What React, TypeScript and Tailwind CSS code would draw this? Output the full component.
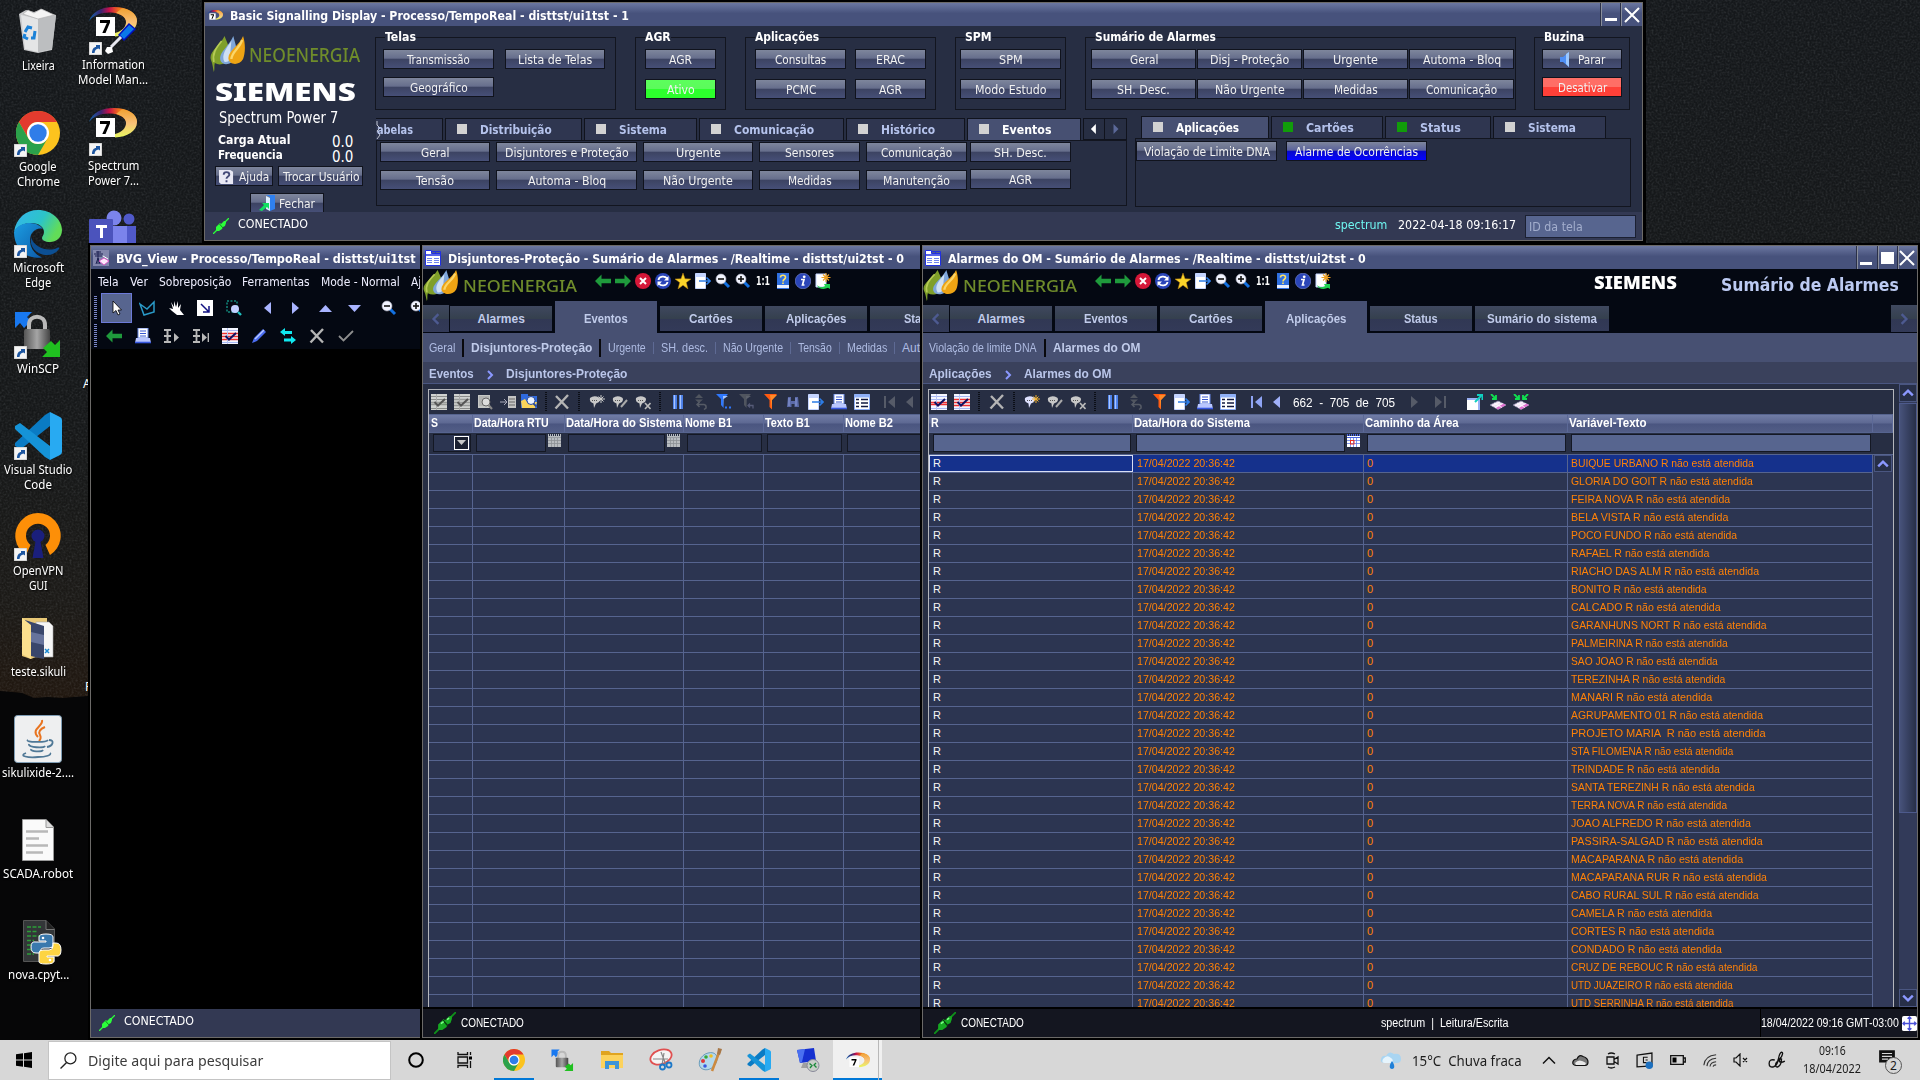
import React, { useLayoutEffect, useRef, useState } from "react";

type P = { className?: string; children?: React.ReactNode };

/* Text squeezed or stretched horizontally to a given width. */
function Fit({ w, t, className = "" }: { w: number; t: string; className?: string }) {
  const ref = useRef<HTMLSpanElement>(null);
  const [k, setK] = useState(1);
  useLayoutEffect(() => {
    if (ref.current) setK(w / ref.current.offsetWidth);
  }, [w, t]);
  return (
    <span className={"inline-block shrink-0 whitespace-pre text-left " + className} style={{ width: w }}>
      <span ref={ref} className="inline-block origin-left" style={{ transform: `scaleX(${k})` }}>
        {t}
      </span>
    </span>
  );
}

const UI = "font-['DejaVu_Sans_Condensed','DejaVu_Sans',sans-serif]";
const ARIAL = "font-['Liberation_Sans',sans-serif]";
const SEGOE = "font-['Noto_Sans',sans-serif]";

/* ---------- icons ---------- */

function Svg({ s = 16, w, h, vb, className = "", children }: { s?: number; w?: number; h?: number; vb?: string } & P) {
  return (
    <svg width={w ?? s} height={h ?? s} viewBox={vb ?? "0 0 16 16"} className={"shrink-0 " + className} fill="none">
      {children}
    </svg>
  );
}

const Arrow7 = ({ s = 48, tool = false, mid = false }: { s?: number; tool?: boolean; mid?: boolean }) => (
  <Svg s={s} vb={mid ? "0 -9 48 48" : "0 0 48 48"}>
    <defs>
      <linearGradient id="arcA" x1="0" y1="0" x2="1" y2="0">
        <stop offset="0" stopColor="#1567b0" />
        <stop offset=".25" stopColor="#3a2470" />
        <stop offset=".42" stopColor="#c8104a" />
        <stop offset=".62" stopColor="#f0701c" />
        <stop offset="1" stopColor="#f2b23a" />
      </linearGradient>
      <linearGradient id="arcB" x1="0" y1="0" x2="0" y2="1">
        <stop offset="0" stopColor="#f0a030" />
        <stop offset=".5" stopColor="#f8c078" />
        <stop offset="1" stopColor="#e8f860" />
      </linearGradient>
    </defs>
    <path d="M0 14C4 4 13 0 25 0 39 0 48 6 48 14L38 15C36 9 30 6 22 5.500 12 5 5 8 0 14Z" fill="url(#arcA)" />
    <path d="M33 1.200C43 3 48 8 48 14.500 48 23 38 29 26 29.500L26 26C33 24 37 20 37 15 37 10 32 7 27 6Z" fill="url(#arcB)" />
    <rect x="7" y="10" width="19" height="19" fill="#fff" />
    <path d="M11 13H21V15.500L16.500 26H13.300L17.800 16H11Z" fill="#000" />
    {tool && (
      <>
        <path d="M40 17 46 22 35 33 30 28Z" fill="#0a78e8" stroke="#0010c0" strokeWidth="1.500" />
        <path d="M32 30 22 40" stroke="#e8e8f0" strokeWidth="3" />
        <path d="M18 40 23 40 24 45 19 47 16 44Z" fill="#fff" />
      </>
    )}
  </Svg>
);

const Chrome = ({ s = 44 }) => (
  <Svg s={s} vb="0 0 48 48">
    <circle cx="24" cy="24" r="24" fill="#fcc31e" />
    <path d="M3.200 12A24 24 0 0 1 44.800 12H24A12 12 0 0 0 13.600 30Z" fill="#e33b2e" />
    <path d="M3.200 12 13.600 30A12 12 0 0 0 34.400 30L24 48A24 24 0 0 1 3.200 12Z" fill="#2ba14b" />
    <circle cx="24" cy="24" r="12" fill="#fff" />
    <circle cx="24" cy="24" r="9.500" fill="#2f7de9" />
  </Svg>
);

const Edge = () => (
  <Svg s={48} vb="0 0 48 48">
    <defs>
      <linearGradient id="eg1" x1="0" y1="0" x2="1" y2=".4">
        <stop offset="0" stopColor="#35b4ef" />
        <stop offset=".6" stopColor="#2cc4c8" />
        <stop offset="1" stopColor="#62dc58" />
      </linearGradient>
      <linearGradient id="eg2" x1="0" y1="0" x2="1" y2="1">
        <stop offset="0" stopColor="#1b9de2" />
        <stop offset="1" stopColor="#0d5aa8" />
      </linearGradient>
    </defs>
    <path d="M0 22C2 8 12 0 24 0 38 0 48 10 48 20 48 28 42 32 36 32 31 32 28 30 28 28 28 26 30 25 30 22 30 17 25 13 17 13 9 13 3 17 0 22Z" fill="url(#eg1)" />
    <path d="M0 22C3 15 10 13 16 13 22 13 27 16 29 19 22 17 16 23 16 30 16 39 22 45 28 47.500 12 50 0 38 0 22Z" fill="url(#eg2)" />
    <path d="M17 27C15 38 24 45 33 45 38 45 42 43 45 39 46 38 45 37 43 38 34 42 20 38 17 27Z" fill="#0c4f93" />
  </Svg>
);

const WinScp = ({ s = 48 }) => (
  <Svg s={s} vb="0 0 48 48">
    <defs>
      <linearGradient id="lk" x1="0" y1="0" x2="1" y2="0">
        <stop offset="0" stopColor="#555" />
        <stop offset=".5" stopColor="#a5a5a5" />
        <stop offset="1" stopColor="#444" />
      </linearGradient>
    </defs>
    <path d="M1 1H18L13 6 17 10 10 17 6 12 1 17Z" fill="#1878f0" />
    <path d="M15 20V14C15 3 31 3 31 14V20" stroke="#b9b9b9" strokeWidth="4" />
    <rect x="10" y="18" width="26" height="20" rx="2" fill="url(#lk)" />
    <path d="M46 29V46H28L33 41 29 37 37 30 41 34Z" fill="#20c020" />
  </Svg>
);

const VsCode = ({ s = 48 }) => (
  <Svg s={s} vb="0 0 48 48">
    <path d="M1 31 31 3 36 0 36 14 7 37 1 34Z" fill="#0a7bc4" />
    <path d="M1 14 6 11 36 34V48L31 45 1 17Z" fill="#1593d8" />
    <path d="M36 0 46 5Q48 6 48 8V40Q48 42 46 43L36 48Z" fill="#28aaf2" />
  </Svg>
);

const OpenVpn = () => (
  <Svg s={48} vb="0 0 48 48">
    <path d="M16.500 32 A12 12 0 1 1 31.500 32L36 42A22.700 22.700 0 1 0 12 42Z" fill="#fd8f08" />
    <circle cx="24" cy="23" r="6.500" fill="#1a1f7c" />
    <path d="M22 26H26L29.500 45H18.500Z" fill="#1a1f7c" />
  </Svg>
);

const Bin = () => (
  <Svg s={48} vb="0 0 48 48">
    <path d="M5 6 12 2 20 4 28 1 36 5 42 7 38 42 24 45 10 42Z" fill="#c9cacc" />
    <path d="M7 7 24 11 24 44 11 41Z" fill="#e4e5e6" />
    <path d="M24 11 42 7 38 41 24 44Z" fill="#bcbec0" />
    <path d="M9 6 14 2 20 5 27 1 34 4 40 7 24 11Z" fill="#f4f4f4" stroke="#aaa" strokeWidth=".6" />
    <path d="M11 24 14 19 18 20M21 23 20 30H17M14 31 10 29 11 26" stroke="#1b82d8" strokeWidth="3" />
  </Svg>
);

const Teams = () => (
  <Svg s={48} vb="0 0 48 48">
    <circle cx="25" cy="9" r="7.500" fill="#7b83eb" />
    <circle cx="40" cy="10" r="5.500" fill="#5059c9" />
    <path d="M34 17H47V36H34Z" fill="#5059c9" />
    <path d="M16 17H38V36H16Z" fill="#7b83eb" />
    <rect y="10" width="24" height="26" rx="1" fill="#4b53bc" />
    <path d="M7 16H18V19H14V29H11V19H7Z" fill="#fff" />
  </Svg>
);

const FolderDesk = () => (
  <Svg s={48} vb="0 0 48 48">
    <path d="M8 4H33V38L17 45 8 42Z" fill="#e8c876" />
    <path d="M22 8H35L39 12V43H20Z" fill="#f6f6f6" stroke="#aaa" strokeWidth=".6" />
    <path d="M11 6 30 12V45L17 42Z" fill="#39466b" />
    <path d="M17 18 30 21V31L17 28Z" fill="#66739c" />
    <path d="M8 4 17 11V45L8 40Z" fill="#fbdf8e" />
    <path d="M31 35 35 39M35 35 31 39" stroke="#1b88d0" strokeWidth="1.500" />
  </Svg>
);

const Java = () => (
  <Svg s={48} vb="0 0 48 48">
    <rect x=".5" y=".5" width="47" height="47" rx="3" fill="#eeeff0" stroke="#7f9db5" />
    <path d="M28 5C30 11 16 14 24 22M31 12C26 14 24 17 26 20 27 22 27 24 25 26" stroke="#e87420" strokeWidth="2" />
    <path d="M14 25C10 27 32 28 34 25M15 29C14 33 30 33 31 31M17 34C16 37 28 37 29 35M12 38C4 41 14 43 24 42 32 42 38 40 36 38M35 25C41 25 39 31 33 32" stroke="#4f7896" strokeWidth="1.800" />
  </Svg>
);

const Doc = () => (
  <Svg s={48} vb="0 0 48 48">
    <path d="M8.500 3.500H32L39.500 11V44.500H8.500Z" fill="#fafafa" stroke="#999" />
    <path d="M32 3.500V11.500H39.500" fill="#ddd" stroke="#999" />
    <path d="M12 15.500H34M12 22.500H25M12 29.500H34M12 36.500H29" stroke="#b8b8b8" strokeWidth="2.600" />
  </Svg>
);

const PyFile = () => (
  <Svg s={48} vb="0 0 48 48">
    <path d="M9.500 3.500H32L40.500 12V44.500H9.500Z" fill="#333638" stroke="#555" />
    <path d="M32 3.500V12.500H40.500" fill="#222" stroke="#777" />
    <path d="M13 10H27M13 14.500H24M13 19H30M13 23.500H20M13 28H19M13 32.500H18M13 37H20" stroke="#2d9e38" strokeWidth="1.400" strokeDasharray="4 1.500" />
    <path d="M25 24V20Q25 17 32 17T39 20V28Q39 31 35 31H30Q26 31 26 36H22Q17 36 17 30T22 25H32V24Z" fill="#3a79ad" stroke="#fff" />
    <path d="M39 26H42Q47 26 47 33T42 39H33V40H40V44Q40 47 32 47T25 44V36Q25 33 29 33H35Q39 33 39 29Z" fill="#fdd443" stroke="#fff" />
    <circle cx="29" cy="21" r="1.300" fill="#fff" />
    <circle cx="36" cy="43" r="1.300" fill="#fff" />
  </Svg>
);

const Shortcut = () => (
  <Svg s={13} vb="0 0 13 13" className="absolute bottom-0 left-0">
    <rect width="13" height="13" fill="#f4f4f4" stroke="#bbb" />
    <path d="M3 11C3 7 5 5 7 5V3H11V7.500L9.500 6.500C7 7 6 8 5.500 11Z" fill="#1d56a0" />
  </Svg>
);

const Leaves = ({ h = 36 }) => (
  <svg width={35} height={h} viewBox="0 0 36 36" preserveAspectRatio="none" fill="none" className="shrink-0">
    <path d="M15 0C18 8 22 14 19 22 17 28 10 30 5 27 4 30 5 33 4 36 3 33 3 28 1 24-2 16 10 10 15 0Z" fill="#7f9f2a" />
    <path d="M12 5C6 12 2 18 4 26" stroke="#b6cb55" strokeWidth="1.800" />
    <path d="M24 0C26 8 29 14 26 22 23 29 13 30 11 25 8 17 19 11 24 0Z" fill="#7fa6da" />
    <path d="M22 5C17 12 11 19 15 26 20 27 22 21 21 15Z" fill="#cfe0f3" />
    <path d="M34 0C37 9 36 18 34 23 30 30 20 29 19 23 18 15 30 10 34 0Z" fill="#eea414" />
    <path d="M33 4C31 12 22 16 22 23" stroke="#fbd66a" strokeWidth="2.400" />
  </svg>
);

const Brand = ({ w, small = false }: { w: number; small?: boolean }) => (
  <div className="flex items-start">
    <Leaves h={small ? 31 : 36} />
    <Fit
      w={w}
      t="NEOENERGIA"
      className={
        "font-['Noto_Sans',sans-serif] font-medium leading-[18px] text-[#6f8c2b] " +
        (small ? "ml-[5px] mt-[7px] text-[16px]" : "ml-[4px] mt-[10px] text-[19px]")
      }
    />
  </div>
);

const Plug = ({ dark = false }) => (
  <Svg s={dark ? 22 : 16}>
    <path d="M0 16 4 12M12 4 16 0" stroke={dark ? "#0f8f1a" : "#2bff3a"} strokeWidth="1.300" />
    <path d="M3 9 7 5 8 6 11 3H13V5L12 8 10 9 9 11 6 13H3Z" fill={dark ? "#16a822" : "#2bff3a"} />
    <path d="M6.500 6 10 10" stroke={dark ? "#06400c" : "#148a20"} />
    {dark && <path d="M5 8.500 7 7M9.500 5.500 11 4.500" stroke="#7dff88" strokeWidth="1.200" />}
  </Svg>
);

const WinTab = () => (
  <Svg>
    <path d="M.5.500H6.500V3.500H15.500V15.500H.5Z" fill="#fff" stroke="#2030e0" />
    <path d="M6.500 1.500H10.500V3.500M10.500 1.500H15.500V4" stroke="#2030e0" />
    <path d="M0 5H16" stroke="#2030e0" strokeWidth="1.500" />
    <path d="M2 8.500H7M9 8.500H14M2 10.500H7M9 10.500H14M2 12.500H7M9 12.500H14" stroke="#6f84f0" />
  </Svg>
);

const BvgIcon = () => (
  <Svg>
    <rect width="16" height="16" fill="#8286ac" />
    <path d="M1 4H10M5 1V14M3 2 8 2M3 14 5 8 7 14M2 6H9" stroke="#1c2050" />
    <path d="M6 11 11 8 16 11 11 15Z" fill="#fbe8fa" stroke="#e040c0" strokeWidth=".8" />
    <path d="M10 6 15 9" stroke="#fff" />
  </Svg>
);

const Left = ({ c = "#1f9a3c" }) => (
  <Svg>
    <path d="M0 8 6.500 1.500V5.800H16V10.200H6.500V14.500Z" fill={c} />
  </Svg>
);
const Right = () => (
  <Svg>
    <path d="M16 8 9.500 1.500V5.800H0V10.200H9.500V14.500Z" fill="#1f9a3c" />
  </Svg>
);
const Stop = () => (
  <Svg>
    <circle cx="8" cy="8" r="8" fill="#d51738" />
    <path d="M5 5 11 11M11 5 5 11" stroke="#fff" strokeWidth="2" />
  </Svg>
);
const Refresh = () => (
  <Svg>
    <circle cx="8" cy="8" r="8" fill="#2a45b8" />
    <path d="M3.500 7C4 3 10 2.500 12 5.500M12.500 9C12 13 6 13.500 4 10.500" stroke="#fff" strokeWidth="1.800" />
    <path d="M13.500 3V7.500H9ZM2.500 13V8.500H7Z" fill="#fff" />
  </Svg>
);
const Star = () => (
  <Svg>
    <path d="M8 0 10 5.800 16 6 11.300 9.600 13 16 8 12.200 3 16 4.700 9.600 0 6 6 5.800Z" fill="#fbd42a" stroke="#b87d10" strokeWidth=".5" />
  </Svg>
);
const Export = () => (
  <Svg>
    <path d="M.5.500H10.500V15.500H.5Z" fill="#fff" stroke="#c4d4ff" />
    <path d="M1 1H10V4H1Z" fill="#c4d4ff" />
    <path d="M4 8H14M11.500 4.500 15 8 11.500 11.500" stroke="#2d7ce6" strokeWidth="1.600" />
  </Svg>
);
const Zoom = ({ plus = false }) => (
  <Svg>
    <path d="M9 9 14 14" stroke="#1370e0" strokeWidth="3" />
    <circle cx="6" cy="6" r="5" fill="#f2f4ff" stroke="#aab" strokeWidth=".6" />
    <path d="M3 6H9" stroke="#111" strokeWidth="1.600" />
    {plus && <path d="M6 3V9" stroke="#111" strokeWidth="1.600" />}
  </Svg>
);
const HelpBook = () => (
  <Svg>
    <path d="M2 0H14V16H2Z" fill="#2f6fe0" />
    <path d="M2 12H14V15H2Z" fill="#e8eeff" />
    <path d="M5.500 4.500C5.500 1.500 10.500 1.500 10.500 4.500 10.500 6.500 8 6 8 8.500M8 9.500V11" stroke="#ffe060" strokeWidth="1.600" />
  </Svg>
);
const Info = () => (
  <Svg>
    <circle cx="8" cy="8" r="7.800" fill="#2a45b8" stroke="#8898e0" strokeWidth=".5" />
    <circle cx="9.200" cy="3.800" r="1.400" fill="#fff" />
    <path d="M6 6.500H9L7.500 12H9.500" stroke="#fff" strokeWidth="1.700" />
  </Svg>
);
const NewPage = () => (
  <Svg>
    <path d="M1 1H11V14H1Z" fill="#fff" stroke="#c4d4ff" />
    <path d="M11 0V9M6.500 4.500H15.500M8 1.500 14 7.500M14 1.500 8 7.500" stroke="#f0a020" strokeWidth="1.100" />
    <path d="M2 12C5 15 8 14.500 10 13L9 11H15V16L13 14.800C9 17 3 16 2 12Z" fill="#20d050" />
  </Svg>
);
const Ack = ({ g = false, all = false }) => (
  <Svg>
    <rect width="16" height="16" fill={g ? "#d0d2d0" : "#f4f6ff"} />
    <path d="M0 2.500H16M0 5.500H16M0 14.500H16" stroke={g ? "#8a8c8a" : "#a8b8f4"} />
    <path d={all ? "M0 5.500H16M0 8.500H16M0 11.500H16" : "M0 8.500H16M0 10.500H16"} stroke={g ? "#999b99" : "#f03030"} strokeWidth="1.300" />
    <path d="M5.500 0V16" stroke={g ? "#aaa" : "#b8c4f4"} />
    <path d="M3.500 8 7 11.500 14 5" stroke={g ? "#555" : "#101060"} strokeWidth="2" />
  </Svg>
);
const FindDoc = () => (
  <Svg>
    <path d="M1 1H13V14H1Z" fill="#c6c8c6" />
    <path d="M2 3H12M2 5H12M2 7H12M2 9H12M2 11H12" stroke="#8c8e8c" strokeWidth=".7" />
    <circle cx="9" cy="8" r="4" fill="#ddd" stroke="#666" />
    <path d="M11.500 11 15 15" stroke="#888" strokeWidth="2" />
  </Svg>
);
const GoDoc = () => (
  <Svg>
    <path d="M0 8H6M4 5 7 8 4 11" stroke="#aab" />
    <path d="M8 2H16V14H8Z" fill="#c4c4c4" />
    <path d="M9 5H15M9 8H15M9 11H15" stroke="#666" />
  </Svg>
);
const FindFolder = () => (
  <Svg>
    <path d="M0 0H7V2H16V14H0Z" fill="#2f6ae0" />
    <path d="M0 7 4 5 6 8H16L14 14H1Z" fill="#fbd45a" />
    <circle cx="10" cy="6.500" r="4" fill="#eaf2ff" stroke="#2a4a9a" />
    <path d="M12.500 9.500 15.500 12.500" stroke="#2a4a9a" strokeWidth="1.800" />
  </Svg>
);
const Cross = () => (
  <Svg>
    <path d="M2 2 14 14.500M14 1 1.500 14.500" stroke="#b4b4b4" strokeWidth="2.400" />
  </Svg>
);
const Bubble = ({ v = 0 }: { v?: number }) => (
  <Svg>
    <path d="M1 4Q5 1 10 3.500 12 5 10 8L7 9.500 5 14 4.500 9.500Q0 8 1 4Z" fill={v === 3 ? "#dfe2ff" : "#c8c8c8"} />
    <path d="M3 6.500H9" stroke="#555" strokeWidth="1.200" strokeDasharray="1 1" />
    {(v === 0 || v === 3) && <path d="M12 1V9M8 5H16M9.500 2.500 14.500 7.500M14.500 2.500 9.500 7.500" stroke={v === 3 ? "#f0b030" : "#ccc"} />}
    {v === 1 && <path d="M9 13 15 6" stroke="#aaa" strokeWidth="2" />}
    {v === 2 && <path d="M10 9 15.500 15M15.500 9 10 15" stroke="#bbb" strokeWidth="1.600" />}
  </Svg>
);
const Pause = () => (
  <Svg>
    <path d="M3 1H7V15H3ZM9 1H13V15H9Z" fill="#4a7fe8" />
    <path d="M4.500 1V15M10.500 1V15" stroke="#a8c4ff" strokeWidth="1.200" />
  </Svg>
);
const UpDown = () => (
  <Svg>
    <path d="M6 0 10 4H2ZM6 9 2 5.500H10Z" fill="#50555f" />
    <path d="M4 10.500H11Q13.500 11 13 14L11 15.500M6.500 8 4 10.500 6.500 13" stroke="#565b66" strokeWidth="1.500" />
  </Svg>
);
const Funnel = ({ a, b, dots = false, undo = false }: { a: string; b: string; dots?: boolean; undo?: boolean }) => (
  <Svg>
    <path d={dots || undo ? "M0 0H12L7.500 5V14L5 11V5Z" : "M2 0H15L10 6V15.500L7.500 13V6Z"} fill={a} />
    <path d={dots || undo ? "M7 2H12L7.500 5V14Z" : "M8 1H15L10 6V15.500Z"} fill={b} />
    {dots && <path d="M9 13.500H11M13 13.500H15" stroke="#2f78ff" strokeWidth="2" />}
    {undo && <path d="M9 11.500H14V14.500M11 9.500 9 11.500 11 13.500" stroke="#565b78" strokeWidth="1.300" />}
  </Svg>
);
const Binoc = () => (
  <Svg>
    <path d="M3 3H6V7H10V3H13L14 13H9.500V10H6.500V13H2Z" fill="#5b6aa8" />
    <path d="M4 4V12M11 4V12" stroke="#8b9ad8" />
  </Svg>
);
const Printer = () => (
  <Svg>
    <path d="M3 0H13V10H3Z" fill="#fff" stroke="#6888e8" />
    <path d="M5 3H11M5 5.500H11M5 8H11" stroke="#3858d0" />
    <path d="M1 10H15L16 15H0Z" fill="#b9c6ff" />
    <path d="M0 14.500H16" stroke="#3858e0" strokeWidth="1.600" />
  </Svg>
);
const ListIc = () => (
  <Svg>
    <path d="M.5.500H15.500V15.500H.5Z" fill="#fff" stroke="#8fb0f8" />
    <path d="M.5 2H15.500" stroke="#8fb0f8" strokeWidth="3" />
    <path d="M2 5.500H5M7 5.500H14M2 9H5M7 9H14M2 12.500H5M7 12.500H14" stroke="#101840" strokeWidth="1.500" />
  </Svg>
);
const First = ({ c }: { c: string }) => (
  <Svg>
    <path d="M3 2V14" stroke={c} strokeWidth="2" />
    <path d="M13 2V14L6 8Z" fill={c} />
  </Svg>
);
const Prev = ({ c }: { c: string }) => (
  <Svg>
    <path d="M12 2V14L5 8Z" fill={c} />
  </Svg>
);
const Next = ({ c }: { c: string }) => (
  <Svg>
    <path d="M5 2V14L12 8Z" fill={c} />
  </Svg>
);
const Last = ({ c }: { c: string }) => (
  <Svg>
    <path d="M13 2V14" stroke={c} strokeWidth="2" />
    <path d="M3 2V14L10 8Z" fill={c} />
  </Svg>
);
const Pop = () => (
  <Svg>
    <path d="M0 4H12V16H0Z" fill="#fff" />
    <path d="M0 5H12M12 4V16" stroke="#9ab0f4" strokeWidth="2" />
    <path d="M8 8 14 2M10 1H15.500V6" stroke="#10d0c0" strokeWidth="2" />
  </Svg>
);
const Net = ({ two = false }) => (
  <Svg>
    <path d="M0 11 8 7 16 11 8 15.500Z" fill="#f2e2f6" stroke="#8a8aa8" strokeWidth=".6" />
    <path d="M8 15.500 16 11 13 9.500 6 14Z" fill="#e070d0" />
    <path d="M4 9 12 13.500M2 12 10 8M5 13.500 13 9.500" stroke="#fff" strokeWidth=".8" />
    <path d="M1 0 5 4M6 1V5H2" stroke="#10e050" strokeWidth="1.800" />
    {two && <path d="M15 0 11 4M10 1V5H14" stroke="#10e050" strokeWidth="1.800" />}
  </Svg>
);
const Calendar = ({ on = false }) => (
  <Svg s={13} vb="0 0 13 13">
    <rect y="2" width="13" height="11" fill={on ? "#fff" : "#b8bcc0"} />
    <path d="M0 1H13" stroke={on ? "#4a66e0" : "#b8bcc0"} strokeWidth="2" strokeDasharray="1 1" />
    <path d="M0 3.500H13" stroke={on ? "#4a66e0" : "#9a9ea4"} />
    <path d="M3.500 4V13M6.500 4V13M9.500 4V13M0 6.500H13M0 9.500H13" stroke={on ? "#5f7ae8" : "#8c9096"} strokeWidth=".8" />
    {on && <rect x="3.500" y="6.500" width="3.500" height="3.500" stroke="#f03020" />}
  </Svg>
);
const Chev = ({ d, c = "#8b98ff", s = 10 }: { d: "u" | "d" | "l" | "r"; c?: string; s?: number }) => (
  <Svg s={s} vb="0 0 10 10">
    <path d={{ u: "M1 7 5 3 9 7", d: "M1 3 5 7 9 3", l: "M7 1 3 5 7 9", r: "M3 1 7 5 3 9" }[d]} stroke={c} strokeWidth="2" />
  </Svg>
);

/* ---------- desktop ---------- */

type Item = { icon: React.ReactNode; lines: [string, number][]; link?: boolean };
const col1: Item[] = [
  { icon: <Bin />, lines: [["Lixeira", 33]] },
  { icon: <Chrome />, lines: [["Google", 38], ["Chrome", 43]], link: true },
  { icon: <Edge />, lines: [["Microsoft", 51], ["Edge", 26]], link: true },
  { icon: <WinScp />, lines: [["WinSCP", 42]], link: true },
  { icon: <VsCode />, lines: [["Visual Studio", 68], ["Code", 28]], link: true },
  { icon: <OpenVpn />, lines: [["OpenVPN", 51], ["GUI", 19]], link: true },
  { icon: <FolderDesk />, lines: [["teste.sikuli", 55]] },
  { icon: <Java />, lines: [["sikulixide-2....", 72]] },
  { icon: <Doc />, lines: [["SCADA.robot", 70]] },
  { icon: <PyFile />, lines: [["nova.cpyt...", 61]] },
];
const col2: Item[] = [
  { icon: <Arrow7 tool />, lines: [["Information", 63], ["Model Man...", 70]], link: true },
  { icon: <Arrow7 />, lines: [["Spectrum", 51], ["Power 7...", 51]], link: true },
  { icon: <Teams />, lines: [] },
];

const IconCol = ({ items, className }: { items: Item[]; className: string }) => (
  <div className={"flex w-[76px] flex-col " + className}>
    {items.map((it, i) => (
      <div key={i} className="flex h-[101px] flex-col items-center">
        <div className="relative flex h-12 w-12 items-center justify-center">
          {it.icon}
          {it.link && <Shortcut />}
        </div>
        <div className={"mt-[2px] flex flex-col items-center text-[12px] leading-[15px] text-white [text-shadow:1px_1px_2px_#000] " + SEGOE}>
          {it.lines.map(([t, w]) => (
            <Fit key={t} w={w} t={t} />
          ))}
        </div>
      </div>
    ))}
  </div>
);

const Wallpaper = () => (
  <svg width="1920" height="1080" className="absolute left-0 top-0">
    <defs>
      <linearGradient id="sky" x1="0" y1="0" x2="0" y2="1">
        <stop offset="0" stopColor="#15181b" />
        <stop offset=".4" stopColor="#161819" />
        <stop offset=".56" stopColor="#1c1a17" />
        <stop offset=".65" stopColor="#21170f" />
      </linearGradient>
      <filter id="grain" x="0" y="0" width="100%" height="100%">
        <feTurbulence type="fractalNoise" baseFrequency=".5" numOctaves="2" seed="4" />
        <feColorMatrix values="0 0 0 0 .6  0 0 0 0 .65  0 0 0 0 .7  .5 .5 0 0 -.42" />
      </filter>
    </defs>
    <rect width="1920" height="1080" fill="url(#sky)" />
    <rect width="1920" height="700" filter="url(#grain)" opacity=".35" />
    <path d="M0 691 12 692 22 693 34 698 48 697 62 698 74 697 88 696V1040H0Z" fill="#060607" />
  </svg>
);

/* ---------- shared window parts ---------- */

const titleBg = "bg-[linear-gradient(to_bottom,#6b77a1_0%,#47527c_45%,#47527c_100%)]";

const Title = ({ icon, t, w, children }: { icon: React.ReactNode; t: string; w: number; children?: React.ReactNode }) => (
  <div className={"flex h-[23px] shrink-0 items-center " + titleBg}>
    <div className="flex w-[25px] shrink-0 pl-[2px]">{icon}</div>
    <Fit w={w} t={t} className={"mt-[2px] text-[13px] font-bold leading-[16px] text-white " + UI} />
    {children}
  </div>
);

const Cap = ({ children, className = "" }: P) => (
  <div className={"flex h-[23px] border-l border-[#8a8f9c] shadow-[-1px_0_0_#2a3048] " + className}>{children}</div>
);

const btnBg = "bg-[linear-gradient(to_bottom,#7e869c_0%,#666e8c_46%,#3c4362_50%,#464f77_100%)]";

const Btn = ({ t, w, className = "", bg = btnBg, children }: { t: string; w: number; bg?: string } & P) => (
  <div className={"flex h-5 shrink-0 items-center justify-center border border-[#10131d] text-[13px] leading-[16px] text-[#f1f1f1] " + UI + " " + bg + " " + className}>
    {children}
    <Fit w={w} t={t} className="mt-px" />
  </div>
);

const Group = ({ t, w, className, children }: { t: string; w: number } & P) => (
  <div className={"relative h-[73px] shrink-0 border border-[#12151f] pt-[11px] " + className}>
    <Fit w={w} t={t} className={"absolute -top-[9px] left-[9px] bg-[#272e43] text-[13px] font-bold leading-[16px] text-white " + UI} />
    {children}
  </div>
);

const Tab = ({ t, w, className, on = false, green = false }: { t: string; w: number; className: string; on?: boolean; green?: boolean }) => (
  <div className={"flex h-[22px] shrink-0 items-center border border-b-0 border-[#10131d] pl-[11px] " + (on ? "bg-[#475072] " : "bg-[#2f3650] ") + className}>
    <div className={"mb-[2px] h-[10px] w-[10px] " + (green ? "bg-[#119c0a]" : "bg-[#d2d2d2]")} />
    <Fit w={w} t={t} className={"ml-[13px] text-[13px] font-bold leading-[16px] " + UI + (on ? " text-white" : " text-[#b5c3ec]")} />
  </div>
);

/* ---------- top window ---------- */

const TopWindow = () => (
  <div className={"absolute left-[204px] top-[2px] flex h-[239px] w-[1439px] flex-col border border-[#6c6a68] " + UI}>
    <Title icon={<div className="mt-px flex w-[18px]"><Arrow7 s={16} mid /></div>} t="Basic Signalling Display - Processo/TempoReal - disttst/ui1tst - 1" w={399}>
      <div className="ml-auto flex">
        <Cap className="w-[20px] items-end pb-[5px] pl-[3px]"><div className="h-[3px] w-[12px] bg-white" /></Cap>
        <Cap className="w-[21px] items-center pl-[2px]">
          <Svg><path d="M1 1 15 15M15 1 1 15" stroke="#fff" strokeWidth="2" /></Svg>
        </Cap>
      </div>
    </Title>
    <div className="flex h-[186px] shrink-0 overflow-hidden bg-[#272e43]">
      <div className="flex w-[170px] shrink-0 flex-col pl-[5px] pt-[10px] text-white">
        <Brand w={111} />
        <Fit w={141} t="SIEMENS" className="mt-[8px] ml-[5px] font-['Noto_Sans',sans-serif] text-[24px] font-black leading-[24px]" />
        <Fit w={119} t="Spectrum Power 7" className="mt-[4px] ml-[9px] text-[15px] leading-[20px]" />
        <div className="mt-[4px] ml-[8px] flex items-end text-[13px] leading-[15px]">
          <div className="flex w-[114px] flex-col font-bold">
            <Fit w={72} t="Carga Atual" />
            <Fit w={65} t="Frequencia" />
          </div>
          <div className="relative top-[3px] flex flex-col text-[15px] leading-[15px]">
            <Fit w={21} t="0.0" />
            <Fit w={21} t="0.0" />
          </div>
        </div>
        <div className="mt-[4px] ml-[5px] flex gap-[5px]">
          <Btn t="Ajuda" w={30} className="w-[58px]">
            <Svg s={15} className="mr-[5px]">
              <path d="M0 1H12L15 3V16H2L0 14Z" fill="#e8e8f4" />
              <path d="M5 6C5 2.500 11 2.500 11 6 11 8 8 8 8 10.500M8 12V14" stroke="#444a78" strokeWidth="2" />
            </Svg>
          </Btn>
          <Btn t="Trocar Usuário" w={76} className="w-[85px]" />
        </div>
        <Btn t="Fechar" w={36} className="mt-[7px] ml-[40px] w-[74px]">
          <Svg s={16} className="mr-[4px]">
            <path d="M7 0H16V14L11 16V2Z" fill="#2f80f0" />
            <path d="M7 1 11 3V16L7 14Z" fill="#dff0ff" />
            <path d="M0 15 5 10 3 8H10V14L8 12 3 16Z" fill="#12e060" />
          </Svg>
        </Btn>
      </div>
      <div className="flex flex-col pt-[11px]">
        <div className="flex gap-[19px]">
          <Group t="Telas" w={31} className="w-[241px] pl-[7px]">
            <div className="flex gap-[11px]">
              <Btn t="Transmissão" w={63} className="w-[111px]" />
              <Btn t="Lista de Telas" w={74} className="w-[100px]" />
            </div>
            <Btn t="Geográfico" w={58} className="mt-[8px] w-[111px]" />
          </Group>
          <Group t="AGR" w={26} className="w-[91px] pl-[9px]">
            <Btn t="AGR" w={23} className="w-[71px]" />
            <Btn t="Ativo" w={28} className="mt-[10px] w-[71px]" bg="bg-[linear-gradient(to_bottom,#5cff5c_0%,#5cfa5c_48%,#2cff2c_50%,#2cff2c_100%)]" />
          </Group>
          <Group t="Aplicações" w={64} className="w-[191px] pl-[9px]">
            <div className="grid grid-cols-[91px_71px] gap-x-[9px] gap-y-[10px]">
              <Btn t="Consultas" w={51} />
              <Btn t="ERAC" w={29} />
              <Btn t="PCMC" w={30} />
              <Btn t="AGR" w={23} />
            </div>
          </Group>
          <Group t="SPM" w={27} className="w-[111px] pl-[4px]">
            <Btn t="SPM" w={24} className="w-[101px]" />
            <Btn t="Modo Estudo" w={72} className="mt-[10px] w-[101px]" />
          </Group>
          <Group t="Sumário de Alarmes" w={121} className="w-[431px] pl-[5px]">
            <div className="grid grid-cols-[105px_105px_105px_105px] gap-x-px gap-y-[10px]">
              <Btn t="Geral" w={28} />
              <Btn t="Disj - Proteção" w={79} />
              <Btn t="Urgente" w={45} />
              <Btn t="Automa - Bloq" w={78} />
              <Btn t="SH. Desc." w={53} />
              <Btn t="Não Urgente" w={70} />
              <Btn t="Medidas" w={44} />
              <Btn t="Comunicação" w={71} />
            </div>
          </Group>
          <Group t="Buzina" w={40} className="-ml-px w-[96px] pl-[7px]">
            <Btn t="Parar" w={27} className="w-[80px]">
              <Svg w={10} h={15} vb="0 0 10 15" className="mr-[8px]">
                <path d="M0 5H3L9 0V15L3 10H0Z" fill="#4f8ff5" />
                <path d="M6 2 9 0V15L6 12Z" fill="#9cc8ff" />
              </Svg>
            </Btn>
            <Btn t="Desativar" w={49} className="mt-[8px] w-[80px]" bg="bg-[linear-gradient(to_bottom,#ff6e66_0%,#ff6e66_48%,#ff4038_50%,#ff4038_100%)]" />
          </Group>
        </div>
        <div className="flex">
          <div className="mt-[8px] ml-px flex w-[751px] flex-col">
            <div className="flex gap-[2px]">
              <div className="flex h-[22px] w-[67px] items-center border border-b-0 border-l-0 border-[#10131d] bg-[#2f3650]">
                <Svg w={5} h={18} vb="0 0 5 18"><path d="M1 0V4L4 7 1 10 4 14 1 18" stroke="#c0c4d0" /></Svg>
                <Fit w={36} t="abelas" className="-ml-[4px] text-[13px] font-bold leading-[16px] text-[#b5c3ec]" />
              </div>
              <Tab t="Distribuição" w={72} className="w-[137px]" />
              <Tab t="Sistema" w={48} className="w-[113px]" />
              <Tab t="Comunicação" w={80} className="w-[145px]" />
              <Tab t="Histórico" w={54} className="w-[119px]" />
              <Tab t="Eventos" w={49} className="w-[114px]" on />
              <div className="flex h-[22px] w-[44px] border border-[#10131d]">
                <div className="flex w-[20px] items-center justify-center"><Svg s={10}><path d="M11 0V16L3 8Z" fill="#fff" /></Svg></div>
                <div className="flex w-[22px] items-center justify-center border-l border-[#10131d]"><Svg s={10}><path d="M4 0V16L12 8Z" fill="#5b6898" /></Svg></div>
              </div>
            </div>
            <div className="h-[66px] border border-[#12151f] pt-px pl-[3px]">
              <div className="flex gap-[6px]">
                <Btn t="Geral" w={28} className="w-[110px]" />
                <Btn t="Disjuntores e Proteção" w={124} className="w-[141px]" />
                <Btn t="Urgente" w={45} className="w-[110px]" />
                <Btn t="Sensores" w={49} className="w-[101px]" />
                <Btn t="Comunicação" w={71} className="w-[101px]" />
                <Btn t="SH. Desc." w={53} className="-ml-[3px] w-[101px]" />
              </div>
              <div className="mt-[8px] flex gap-[6px]">
                <Btn t="Tensão" w={38} className="w-[110px]" />
                <Btn t="Automa - Bloq" w={78} className="w-[141px]" />
                <Btn t="Não Urgente" w={70} className="w-[110px]" />
                <Btn t="Medidas" w={44} className="w-[101px]" />
                <Btn t="Manutenção" w={67} className="w-[101px]" />
                <Btn t="AGR" w={23} className="-mt-px -ml-[3px] w-[101px]" />
              </div>
            </div>
          </div>
          <div className="mt-[6px] ml-[8px] flex w-[496px] flex-col">
            <div className="flex gap-[2px] pl-[6px]">
              <Tab t="Aplicações" w={63} className="w-[128px]" on />
              <Tab t="Cartões" w={48} className="w-[112px]" green />
              <Tab t="Status" w={41} className="w-[106px]" green />
              <Tab t="Sistema" w={48} className="w-[113px]" />
            </div>
            <div className="flex h-[69px] gap-[9px] border border-[#12151f] pt-[2px]">
              <Btn t="Violação de Limite DNA" w={126} className="w-[141px]" />
              <Btn t="Alarme de Ocorrências" w={123} className="w-[141px]" bg="bg-[linear-gradient(to_bottom,#7e869c_0%,#5a629c_46%,#0808c8_50%,#0404ff_100%)]" />
            </div>
          </div>
        </div>
      </div>
    </div>
    <div className="flex h-[28px] items-center bg-[#333953] pl-[8px] pr-[6px] text-[13px] text-white">
      <Plug />
      <Fit w={70} t="CONECTADO" className="mb-[4px] ml-[9px]" />
      <Fit w={52} t="spectrum" className="mb-[2px] ml-auto text-[#6ff5f0]" />
      <Fit w={118} t="2022-04-18 09:16:17" className="mb-[2px] ml-[11px]" />
      <div className="ml-[9px] flex h-[23px] w-[111px] items-center border border-[#1b2032] bg-[#57658f] pl-[3px]">
        <Fit w={54} t="ID da tela" className="mt-px text-[#a3aecd]" />
      </div>
    </div>
  </div>
);

/* ---------- BVG window ---------- */

const Tri = ({ d }: { d: string }) => (
  <Svg>
    <path d={d} fill="#a9b4ff" />
  </Svg>
);

const Grip = () => (
  <div className="ml-[3px] h-[24px] w-[3px] shrink-0 bg-[repeating-linear-gradient(to_bottom,#7a86c8_0_1px,transparent_1px_2px)]" />
);

const BvgWindow = () => (
  <div className={"absolute left-[90px] top-[245px] flex h-[793px] w-[330px] flex-col overflow-hidden border-y border-l border-[#6c6a68] bg-black " + UI}>
    <Title icon={<BvgIcon />} t="BVG_View - Processo/TempoReal - disttst/ui1tst" w={300} />
    <div className="flex h-[80px] shrink-0 flex-col bg-[#040812]">
      <div className="flex h-[24px] items-center gap-[11px] pl-[7px] pt-[2px] text-[13px] text-[#eef]">
        <Fit w={21} t="Tela" />
        <Fit w={18} t="Ver" />
        <Fit w={72} t="Sobreposição" />
        <Fit w={68} t="Ferramentas" />
        <Fit w={79} t="Mode - Normal" />
        <Fit w={10} t="Aj" />
      </div>
      <div className="flex h-[30px] items-center">
        <Grip />
        <div className="ml-[4px] flex h-[30px] w-[31px] shrink-0 items-center justify-center border border-[#6c7ad8] bg-[#57658f]">
          <Svg><path d="M4 1V13L7 10.500 9 15 11 14 9 10H12.500Z" fill="#fff" stroke="#000" strokeWidth=".8" /></Svg>
        </div>
        <div className="flex shrink-0 gap-[13px] pl-[7px]">
          <Svg><path d="M1 4 8 9 15 2V12L5 15Z" stroke="#2a9ac8" strokeWidth="1.500" /></Svg>
          <Svg><path d="M3 2 6 7 6 1 8 7 10 1 10 8 13 4 12 10 16 15H9L4 11 1 8 5 9Z" fill="#fff" /></Svg>
          <Svg><rect width="16" height="16" fill="#fff" /><path d="M4 4 12 12M12 6V12H6" stroke="#101080" strokeWidth="1.500" /></Svg>
          <Svg><path d="M1 1H11V12H1Z" stroke="#18c8b0" strokeDasharray="2 1.500" /><circle cx="9" cy="9" r="4" fill="#c4d0ff" /><path d="M12 12 15 15" stroke="#20c0c0" strokeWidth="2.400" /></Svg>
          <div className="flex gap-[13px] pl-[4px]">
            <Tri d="M12 2V14L5 8Z" />
            <Tri d="M4 2V14L11 8Z" />
            <Tri d="M2 12H15L8.500 5Z" />
            <Tri d="M2 5H15L8.500 12Z" />
          </div>
          <div className="flex pl-[6px]"><Zoom /></div>
          <div className="flex"><Zoom plus /></div>
        </div>
      </div>
      <div className="flex h-[26px] items-center">
        <Grip />
        <div className="flex shrink-0 gap-[13px] pl-[9px]">
          <Left />
          <Printer />
          <Svg><path d="M0 2H7M0 8H7M0 14H7M3.500 2V14" stroke="#b8b8b8" strokeWidth="2" /><path d="M10 5V14L15 9.500Z" fill="#b8b8b8" /></Svg>
          <Svg><path d="M0 2H7M0 8H7M0 14H7M3.500 2V14M15.500 5V14" stroke="#b8b8b8" strokeWidth="1.800" /><path d="M9 5V14L14 9.500Z" fill="#b8b8b8" /></Svg>
          <Ack all />
          <Svg><path d="M1 15 3 10 12 1 15 4 6 13Z" fill="#4a6cf0" /><path d="M4 11 13 2" stroke="#b8c8ff" strokeWidth="1.500" /></Svg>
          <Svg><path d="M0 4 5 0V3H12V6H5V8ZM16 12 11 8V10.500H4V13.500H11V16Z" fill="#10e8f0" /></Svg>
          <Cross />
          <Svg><path d="M1 8 5.500 12.500 15 3" stroke="#8e8e8e" strokeWidth="1.800" /></Svg>
        </div>
      </div>
    </div>
    <div className="mt-auto flex h-[28px] shrink-0 items-center bg-[#333953] pl-[8px] text-[13px] text-white">
      <Plug />
      <Fit w={70} t="CONECTADO" className="mb-[4px] ml-[9px]" />
    </div>
  </div>
);

/* ---------- alarm summary windows ---------- */

const HeaderIcons = () => (
  <div className="flex gap-[4px] pt-[4px] pl-[18px]">
    <Left />
    <Right />
    <Stop />
    <Refresh />
    <Star />
    <Export />
    <Zoom />
    <Zoom plus />
    <Fit w={14} t="1:1" className={"mx-px pt-px text-[13px] font-bold leading-[14px] text-white " + UI} />
    <HelpBook />
    <Info />
    <NewPage />
  </div>
);

const NavTab = ({ t, w, on = false, className = "w-[102px]" }: { t: string; w: number; on?: boolean; className?: string }) => (
  <div
    className={
      "flex shrink-0 justify-center text-[12px] font-bold leading-[14px] text-[#c0cbea] " +
      ARIAL +
      " " +
      (on ? "h-[32px] bg-[#475072] pt-[11px] " : "mt-[5px] h-[25px] bg-[linear-gradient(to_bottom,#3f485f_0%,#35404e_50%,#313854_52%,#333a58_100%)] pt-[6px] ") +
      className
    }
  >
    <Fit w={w} t={t} />
  </div>
);

const ArrowTab = ({ d, className = "" }: { d: "l" | "r"; className?: string }) => (
  <div className={"mt-[4px] flex h-[27px] w-[26px] shrink-0 items-center justify-center bg-[linear-gradient(to_bottom,#3f485f_0%,#35404e_50%,#313854_52%,#333a58_100%)] " + className}>
    <Chev d={d} c="#4d5a90" s={12} />
  </div>
);

const Bar = ({ thick = false }) => <div className={thick ? "h-[18px] w-[2px] bg-[#08080c]" : "h-[12px] w-px bg-[#5e6a94]"} />;

const Sub = ({ t, w, on = false }: { t: string; w: number; on?: boolean }) => (
  <Fit w={w} t={t} className={on ? "mx-[7px] text-[13px] font-bold text-[#c0cbea]" : "mx-[7px] text-[12px] text-[#aebbe2]"} />
);

const Crumbs = ({ a, b }: { a: [string, number]; b: [string, number] }) => (
  <div className={"flex h-[22px] shrink-0 items-center border-b border-[#4a5681] bg-[#3a415c] pl-[6px] pt-[2px] text-[13px] font-bold text-[#bac6ea] " + ARIAL}>
    <Fit w={a[1]} t={a[0]} />
    <div className="mx-[11px] mt-[2px]"><Chev d="r" s={10} /></div>
    <Fit w={b[1]} t={b[0]} />
  </div>
);

const C = ({ children }: P) => <div className="flex w-[23px] shrink-0 justify-center">{children}</div>;
const Sep = ({ narrow = false }) => (
  <div className={"flex h-[20px] shrink-0 justify-center " + (narrow ? "w-[8px]" : "w-[12px]")}>
    <div className="w-[2px] bg-[repeating-linear-gradient(to_bottom,#0b0e16_0_1px,transparent_1px_2px)]" />
  </div>
);

const Status = ({ children }: P) => (
  <div className={"flex h-[30px] shrink-0 items-center border-t-2 border-black bg-[#141620] pl-[11px] text-[12px] text-white " + ARIAL}>
    <Plug dark />
    <Fit w={63} t="CONECTADO" className="ml-[5px]" />
    {children}
  </div>
);

const headBg = "bg-[linear-gradient(to_bottom,#707ca6_0%,#5d6892_48%,#4a5580_52%,#525d86_100%)]";

type Col = { t: string; w: number; cal?: boolean; drop?: boolean };

const Grid = ({ cols, tpl, rows, live = false }: { cols: Col[]; tpl: string; rows: [string, number][]; live?: boolean }) => (
  <div className={ARIAL + " flex min-h-0 flex-1 flex-col overflow-hidden"}>
    <div className={"grid h-[19px] shrink-0 border-y border-[#56648f] " + headBg + " " + tpl}>
      {cols.map((c, i) => (
        <div key={i} className={"flex items-center overflow-hidden border-r border-[#5c6997] pb-px text-[12px] font-bold leading-[14px] text-white " + (i ? "pl-px" : "pl-[2px]")}>
          {c.t && <Fit w={c.w} t={c.t} />}
        </div>
      ))}
    </div>
    <div className={"grid h-[22px] shrink-0 border-b border-[#56648f] bg-[#272e43] " + tpl}>
      {cols.map((c, i) =>
        c.t ? (
          <div key={i} className={"flex items-start gap-[2px] pr-[2px] pt-px " + (i ? "pl-[3px]" : "pl-[4px]")}>
            <div className={"flex h-[18px] flex-1 items-center justify-end border border-[#141824] pr-px " + (live ? "bg-[#57658f]" : "bg-[#2c3551]")}>
              {c.drop && (
                <div className="flex h-[14px] w-[15px] items-center justify-center border border-white bg-[#1b2030]">
                  <Svg w={9} h={6} vb="0 0 9 6"><path d="M0 0H9L4.500 5Z" fill="#c8c8c8" /></Svg>
                </div>
              )}
            </div>
            {c.cal && <div className="mr-[2px] flex"><Calendar on={live} /></div>}
          </div>
        ) : (
          <div key={i} />
        ),
      )}
    </div>
    <div className="flex min-h-0 flex-1 overflow-hidden">
      <div className="flex-1">
        {rows.map(([r, w], i) => (
          <div key={i} className={"grid h-[18px] border-b border-[#56648f] text-[11px] leading-[17px] text-[#ff8208] " + (live && i === 0 ? "bg-[#15318c] " : "bg-[#2c3551] ") + tpl}>
            {live ? (
              <>
                <div className={"border-r text-[#f4f4f4] " + (i === 0 ? "border border-[#d8def4] pl-[3px] !leading-[15px]" : "border-[#56648f] pl-[4px]")}>R</div>
                <div className="border-r border-[#56648f] pl-[4px]"><Fit w={98} t="17/04/2022 20:36:42" /></div>
                <div className="border-r border-[#56648f] pl-[3px]">0</div>
                <div className="border-r border-[#56648f] pl-[3px]"><Fit w={w} t={r + " R não está atendida"} /></div>
                <div className="mb-[-1px] border-b border-[#323a59] bg-[#323a59]">
                  {i === 0 && (
                    <div className="ml-px flex h-[17px] w-[18px] items-center justify-center border border-[#4a5681] bg-[#272f48]">
                      <Chev d="u" s={12} />
                    </div>
                  )}
                </div>
              </>
            ) : (
              cols.map((_, j) => <div key={j} className="border-r border-[#56648f]" />)
            )}
          </div>
        ))}
      </div>
    </div>
  </div>
);

const names: [string, number][] = [
  ["BUIQUE URBANO", 183], ["GLORIA DO GOIT", 182], ["FEIRA NOVA", 159], ["BELA VISTA", 157], ["POCO FUNDO", 166],
  ["RAFAEL", 138], ["RIACHO DAS ALM", 188], ["BONITO", 136], ["CALCADO", 150], ["GARANHUNS NORT", 196],
  ["PALMEIRINA", 157], ["SAO JOAO", 147], ["TEREZINHA", 154], ["MANARI", 141], ["AGRUPAMENTO 01", 192],
  ["PROJETO MARIA ", 195], ["STA FILOMENA", 162], ["TRINDADE", 149], ["SANTA TEREZINH", 184], ["TERRA NOVA", 156],
  ["JOAO ALFREDO", 180], ["PASSIRA-SALGAD", 192], ["MACAPARANA", 172], ["MACAPARANA RUR", 196], ["CABO RURAL SUL", 188],
  ["CAMELA", 141], ["CORTES", 143], ["CONDADO", 151], ["CRUZ DE REBOUC", 187], ["UTD JUAZEIRO", 162], ["UTD SERRINHA", 162],
];

const G = "#565b68";

const EventsWindow = () => (
  <div className="absolute left-[422px] top-[245px] flex h-[793px] w-[498px] flex-col overflow-hidden border-y border-l border-[#6c6a68] bg-[#272e43]">
    <Title icon={<WinTab />} t="Disjuntores-Proteção - Sumário de Alarmes - /Realtime - disttst/ui2tst - 0" w={456} />
    <div className="flex h-[32px] shrink-0 bg-[#040812]">
      <div className="pt-px"><Brand w={114} small /></div>
      <HeaderIcons />
    </div>
    <div className="flex h-[32px] shrink-0 gap-[3px] bg-[#040812]">
      <ArrowTab d="l" className="-mr-[2px]" />
      <NavTab t="Alarmes" w={47} />
      <NavTab t="Eventos" w={44} on />
      <NavTab t="Cartões" w={44} />
      <NavTab t="Aplicações" w={60} />
      <NavTab t="Status" w={34} />
    </div>
    <div className={"flex h-[29px] shrink-0 items-center bg-[#475072] " + ARIAL}>
      <div className="flex items-center">
        <Fit w={26} t="Geral" className="ml-[6px] mr-[7px] text-[12px] text-[#aebbe2]" />
        <Bar thick />
        <Sub t="Disjuntores-Proteção" w={121} on />
        <Bar thick />
        <Sub t="Urgente" w={38} />
        <Bar />
        <Sub t="SH. desc." w={47} />
        <Bar />
        <Sub t="Não Urgente" w={60} />
        <Bar />
        <Sub t="Tensão" w={34} />
        <Bar />
        <Sub t="Medidas" w={40} />
        <Bar />
        <Sub t="Aut" w={18} />
      </div>
    </div>
    <Crumbs a={["Eventos", 45]} b={["Disjuntores-Proteção", 121]} />
    <div className="mt-[5px] ml-[5px] flex min-h-0 flex-1 flex-col border-l border-t border-[#b4b6bc]">
      <div className="-ml-[2px] flex h-[24px] shrink-0 items-center">
        <C><Ack g /></C><C><Ack g all /></C><C><FindDoc /></C><C><GoDoc /></C><C><div className="-ml-[4px]"><FindFolder /></div></C>
        <Sep narrow />
        <C><Cross /></C>
        <Sep />
        <C><Bubble /></C><C><Bubble v={1} /></C><C><Bubble v={2} /></C>
        <Sep />
        <C><Pause /></C><C><UpDown /></C><C><Funnel a="#2f78ff" b="#a8c8ff" dots /></C><C><Funnel a="#50555f" b="#5c616c" undo /></C>
        <C><Funnel a="#ff5a10" b="#ff8a28" /></C><C><Binoc /></C><C><Export /></C><C><Printer /></C><C><ListIc /></C>
        <div className="ml-[5px] flex"><C><First c={G} /></C><div className="-ml-[4px]"><C><Prev c={G} /></C></div></div>
      </div>
      <Grid
        tpl="grid-cols-[44px_92px_119px_80px_80px_120px]"
        cols={[
          { t: "S", w: 7, drop: true },
          { t: "Data/Hora RTU", w: 75, cal: true },
          { t: "Data/Hora do Sistema", w: 116, cal: true },
          { t: "Nome B1", w: 47 },
          { t: "Texto B1", w: 45 },
          { t: "Nome B2", w: 48 },
        ]}
        rows={names}
      />
    </div>
    <Status />
  </div>
);

const AlarmsWindow = () => (
  <div className="absolute left-[922px] top-[245px] flex h-[793px] w-[996px] flex-col overflow-hidden border border-[#6c6a68] bg-[#272e43]">
    <Title icon={<WinTab />} t="Alarmes do OM - Sumário de Alarmes - /Realtime - disttst/ui2tst - 0" w={418}>
      <div className="ml-auto flex">
        <Cap className="w-[21px] items-end pb-[4px] pl-[2px]"><div className="h-[3px] w-[12px] bg-white" /></Cap>
        <Cap className="w-[20px] items-center pl-[2px]"><div className="h-[12px] w-[13px] bg-white" /></Cap>
        <Cap className="w-[19px] items-center">
          <Svg><path d="M1 1 15 15M15 1 1 15" stroke="#fff" strokeWidth="2" /></Svg>
        </Cap>
      </div>
    </Title>
    <div className="flex h-[32px] shrink-0 bg-[#040812]">
      <div className="pt-px"><Brand w={114} small /></div>
      <HeaderIcons />
      <Fit w={83} t="SIEMENS" className="ml-auto mt-[3px] font-['Noto_Sans',sans-serif] text-[18px] font-black leading-[20px] text-white" />
      <Fit w={178} t="Sumário de Alarmes" className={"ml-[44px] mr-[18px] mt-[5px] text-[17px] font-bold leading-[22px] text-[#bccaf2] " + UI} />
    </div>
    <div className="flex h-[32px] shrink-0 gap-[3px] bg-[#040812]">
      <ArrowTab d="l" className="-mr-[2px]" />
      <NavTab t="Alarmes" w={47} />
      <NavTab t="Eventos" w={44} />
      <NavTab t="Cartões" w={44} />
      <NavTab t="Aplicações" w={60} on />
      <NavTab t="Status" w={34} />
      <NavTab t="Sumário do sistema" w={110} className="w-[134px]" />
      <ArrowTab d="r" className="ml-auto" />
    </div>
    <div className={"flex h-[29px] shrink-0 items-center bg-[#475072] " + ARIAL}>
      <Fit w={108} t="Violação de limite DNA" className="ml-[6px] mr-[7px] text-[12px] text-[#aebbe2]" />
      <Bar thick />
      <Sub t="Alarmes do OM" w={87} on />
    </div>
    <Crumbs a={["Aplicações", 63]} b={["Alarmes do OM", 87]} />
    <div className="flex min-h-0 flex-1">
      <div className="mt-[5px] ml-[5px] flex min-h-0 w-[966px] flex-col border-x border-t border-[#b4b6bc]">
        <div className="-ml-[2px] flex h-[24px] shrink-0 items-center">
          <C><Ack /></C><C><Ack all /></C>
          <Sep />
          <C><Cross /></C>
          <Sep />
          <C><Bubble v={3} /></C><C><Bubble v={1} /></C><C><Bubble v={2} /></C>
          <Sep />
          <C><Pause /></C><C><UpDown /></C><C><Funnel a="#ff5a10" b="#ff8a28" /></C><C><Export /></C><C><Printer /></C><C><ListIc /></C>
          <div className="ml-[6px] flex"><C><First c="#8fa4f4" /></C><div className="-ml-[4px]"><C><Prev c="#a0b0f8" /></C></div></div>
          <Fit w={102} t="662  -  705  de  705" className={"ml-[6px] mt-px text-[12px] text-white " + ARIAL} />
          <div className="ml-[7px] flex"><C><Next c={G} /></C><div className="ml-[3px]"><C><Last c={G} /></C></div></div>
          <div className="ml-[12px] flex"><C><Pop /></C><C><Net /></C><C><Net two /></C></div>
        </div>
        <Grid
          live
          tpl="grid-cols-[204px_231px_204px_305px_20px]"
          cols={[
            { t: "R", w: 8 },
            { t: "Data/Hora do Sistema", w: 116, cal: true },
            { t: "Caminho da Área", w: 94 },
            { t: "Variável-Texto", w: 77 },
            { t: "", w: 0 },
          ]}
          rows={names}
        />
      </div>
      <div className="ml-[5px] flex w-[18px] flex-col bg-[#323a59]">
        <div className="flex h-[18px] items-center justify-center border border-[#4a5681] bg-[#272f48]"><Chev d="u" s={12} /></div>
        <div className="mt-px h-[410px] border border-[#4d5a8c] bg-[linear-gradient(to_right,#47527a,#272f48)]" />
        <div className="mt-auto flex h-[18px] items-center justify-center border border-[#4a5681] bg-[#272f48]"><Chev d="d" s={12} /></div>
      </div>
    </div>
    <Status>
      <Fit w={128} t="spectrum  |  Leitura/Escrita" className="ml-[357px]" />
      <div className="ml-auto flex h-[28px] items-center border-l border-black">
        <Fit w={138} t="18/04/2022 09:16 GMT-03:00" />
        <Svg s={15} className="ml-[3px]">
          <rect width="16" height="16" rx="2" fill="#fff" />
          <path d="M8 1V15M1 8H15M6 3 8 1 10 3M6 13 8 15 10 13M3 6 1 8 3 10M13 6 15 8 13 10" stroke="#4a50d8" strokeWidth="1.500" />
        </Svg>
      </div>
    </Status>
  </div>
);

/* ---------- taskbar ---------- */

const App49 = ({ children, run = false, on = false }: { run?: boolean; on?: boolean } & P) => (
  <div className={"relative flex h-[40px] w-[49px] shrink-0 items-center justify-center " + (on ? "-ml-[7px] bg-[#f0f0f0]" : "")}>
    {children}
    {run && <div className={"absolute bottom-0 h-[2px] bg-[#0078d7] " + (on ? "w-[49px]" : "w-[40px]")} />}
  </div>
);

const Taskbar = () => (
  <div className={"absolute bottom-0 left-0 flex h-[40px] w-[1920px] items-center bg-[#d7d7d7] text-[#1c1c1c] " + SEGOE}>
    <div className="flex w-[48px] justify-center">
      <Svg><path d="M0 2.300 7 1.300V7.500H0ZM8 1.200 16 0V7.500H8ZM0 8.500H7V14.700L0 13.700ZM8 8.500H16V16L8 14.800Z" fill="#000" /></Svg>
    </div>
    <div className="flex h-[39px] w-[343px] items-center border border-[#c4c4c4] bg-white pl-[11px]">
      <Svg s={17}><circle cx="9.800" cy="6" r="5.200" stroke="#222" strokeWidth="1.200" /><path d="M6.200 9.800 .5 15.500" stroke="#222" strokeWidth="1.300" /></Svg>
      <Fit w={175} t="Digite aqui para pesquisar" className="ml-[11px] text-[15px] leading-[20px] text-[#3c3c3c]" />
    </div>
    <App49><Svg><circle cx="8" cy="8" r="6.800" stroke="#000" strokeWidth="2" /></Svg></App49>
    <App49>
      <Svg><path d="M1 0V2.500H10.500V0M1 16V13.500H10.500V16M1 5H10.500V11H1ZM13.500 0V3M13.500 9V16" stroke="#111" strokeWidth="1.300" /><path d="M12 4.500H15V7.500H12Z" fill="#000" /></Svg>
    </App49>
    <App49 run><Chrome s={22} /></App49>
    <App49><WinScp s={23} /></App49>
    <App49>
      <Svg w={22} h={20} vb="0 0 22 20">
        <path d="M0 1H8L10 3H22V18H0Z" fill="#e0a420" />
        <path d="M0 5H22V18H0Z" fill="#fcd25c" />
        <path d="M4 19V11H18V19H14V15H8V19Z" fill="#3d94d8" />
      </Svg>
    </App49>
    <App49>
      <Svg s={24} vb="0 0 24 24">
        <ellipse cx="12" cy="9" rx="11" ry="7" transform="rotate(-20 12 9)" fill="#f4f4f4" stroke="#e05050" strokeWidth="1.800" />
        <path d="M4 11H19M12 4 17 17M15 5 13 17" stroke="#888" strokeWidth="1.200" />
        <circle cx="13.500" cy="19" r="2.500" stroke="#1c78c8" strokeWidth="1.800" />
        <circle cx="20" cy="17" r="2.500" stroke="#1c78c8" strokeWidth="1.800" />
      </Svg>
    </App49>
    <App49>
      <Svg s={24} vb="0 0 24 24">
        <path d="M10 5C18 3 21 9 18 15 15 21 8 24 3 20-1 16 2 7 10 5Z" fill="#b4d8ec" stroke="#6a9cba" />
        <circle cx="5" cy="13" r="2" fill="#e03838" /><circle cx="8" cy="9" r="1.800" fill="#38a838" /><circle cx="13" cy="8" r="1.800" fill="#f0c020" /><circle cx="7" cy="18" r="1.800" fill="#3858e0" />
        <path d="M22 2 14 23" stroke="#cc8a40" strokeWidth="2.600" />
        <path d="M20 0 24 1 22 7 19 6Z" fill="#a87848" />
      </Svg>
    </App49>
    <App49 run><VsCode s={24} /></App49>
    <App49>
      <Svg s={24} vb="0 0 24 24">
        <path d="M1 2 18 0 20 13 4 15Z" fill="#1530d0" />
        <path d="M1 2 9 1 6 14 4 15Z" fill="#4a70f0" />
        <path d="M7 15H14V18L18 20H5Z" fill="#a0a0a0" />
        <circle cx="17" cy="17.500" r="6" fill="#c8cec8" stroke="#889" />
        <path d="M13.500 15.500 16 17.500 14 20M20 15 18 17 20.500 19.500" stroke="#188838" strokeWidth="1.300" />
      </Svg>
    </App49>
    <div className="flex h-[40px] pl-[8px]">
      <App49 run on><Arrow7 s={24} mid /></App49>
      <div className="z-10 -ml-[4px] h-[40px] w-px bg-[#b8b8b8]" />
    </div>
    <div className="ml-auto flex items-center">
      <Svg w={22} h={19} vb="0 0 22 19">
        <path d="M5 12Q0 12 1 8 2 4 6 5 9-1 14 3 21 2 21 8 21 12 17 12Z" fill="#a9d5f2" />
        <path d="M3 8Q7 3 11 7 14 9 12 12H5Q1 12 3 8Z" fill="#e6f4fc" />
        <path d="M12 10Q15 14 14 17 12 19 10 17 9 14 12 10Z" fill="#1f80d8" />
      </Svg>
      <Fit w={110} t="15°C  Chuva fraca" className="mt-[2px] ml-[10px] text-[14px] leading-[18px]" />
      <Svg w={14} h={9} vb="0 0 14 9" className="ml-[20px]"><path d="M1 7.500 7 1.500 13 7.500" stroke="#111" strokeWidth="1.500" /></Svg>
      <Svg w={17} h={13} vb="0 0 17 13" className="ml-[16px]"><path d="M4 11.500Q0 11 1 7.500 2 5 5 5 7 0 11 2.500 16 4 16 8 16 11.500 13 11.500Z" fill="#777" stroke="#111" strokeWidth="1.200" /><path d="M3 9Q7 4 14 9L13 11H4Z" fill="#e8e8e8" /></Svg>
      <Svg w={13} h={17} vb="0 0 13 17" className="ml-[17px]"><path d="M1 5H8V12H1ZM8 7.500 12 5V12L8 9.500M2 2Q5 0 9 2M2 15Q5 17 9 15" stroke="#111" strokeWidth="1.300" /></Svg>
      <Svg s={17} className="ml-[17px]"><path d="M1 3 15 1V13L1 14Z" stroke="#111" strokeWidth="1.200" /><path d="M11 5H7V10H10M9 7.500H11" stroke="#111" /><circle cx="12.500" cy="12.500" r="3.500" fill="#1c70c0" /></Svg>
      <Svg w={16} h={10} vb="0 0 16 10" className="ml-[17px]"><path d="M.7.700H13.300V9.300H.7ZM13.500 3H15.300V7H13.500" stroke="#111" strokeWidth="1.300" /><path d="M2.500 2.500H6.500V7.500H2.500Z" fill="#000" /></Svg>
      <Svg s={14} className="ml-[17px]"><path d="M1 14Q2 3 15 2M4.500 15Q5 7 15 6M8 15.500Q8.500 10.500 15 10M11.500 15.500Q12 13.500 15 13.500" stroke="#333" strokeWidth="1.300" /></Svg>
      <Svg w={16} h={14} vb="0 0 16 14" className="ml-[16px]"><path d="M1 5H3L7 1V13L3 9H1ZM10 5 14 9M14 5 10 9" stroke="#111" strokeWidth="1.200" /></Svg>
      <Svg s={18} className="ml-[19px]">
        <path d="M6 8Q1 7 1 11 1 15 5 14 8 13 9 8 10 2 12 1 14 1 12 5L7 11Q6 15 9 14 12 12 12 7 11 6 10 9 11 11 15 9" stroke="#111" strokeWidth="1.200" />
      </Svg>
      <div className="ml-[16px] flex w-[60px] flex-col items-center text-[12px] leading-[18px]">
        <Fit w={27} t="09:16" />
        <Fit w={58} t="18/04/2022" />
      </div>
      <div className="relative ml-[16px] h-[26px] w-[42px]">
        <Svg s={18} className="mt-[2px]"><path d="M1 1H15V12H10L7 15V12H1Z" fill="#111" /><path d="M3.500 4H12.500M3.500 6.500H12.500M3.500 9H9" stroke="#d7d7d7" /></Svg>
        <div className="absolute left-[7px] top-[10px] flex h-[17px] w-[17px] items-center justify-center rounded-full border border-[#555] bg-[#d7d7d7] text-[12px] leading-none">2</div>
      </div>
    </div>
  </div>
);

export default function App() {
  return (
    <div className="relative h-[1080px] w-[1920px] overflow-hidden bg-black">
      <Wallpaper />
      <IconCol items={col1} className="absolute left-0 top-[8px]" />
      <IconCol items={col2} className="absolute left-[75px] top-[7px]" />
      <span className={"absolute left-[83px] top-[376px] text-[12px] leading-[15px] text-white " + SEGOE}>A</span>
      <span className={"absolute left-[85px] top-[679px] text-[12px] leading-[15px] text-white " + SEGOE}>F</span>
      <div className="absolute left-[202px] top-0 h-[243px] w-[1444px] bg-black" />
      <div className="absolute left-[88px] top-[243px] h-[797px] w-[1832px] bg-black" />
      <TopWindow />
      <BvgWindow />
      <EventsWindow />
      <AlarmsWindow />
      <Taskbar />
    </div>
  );
}
